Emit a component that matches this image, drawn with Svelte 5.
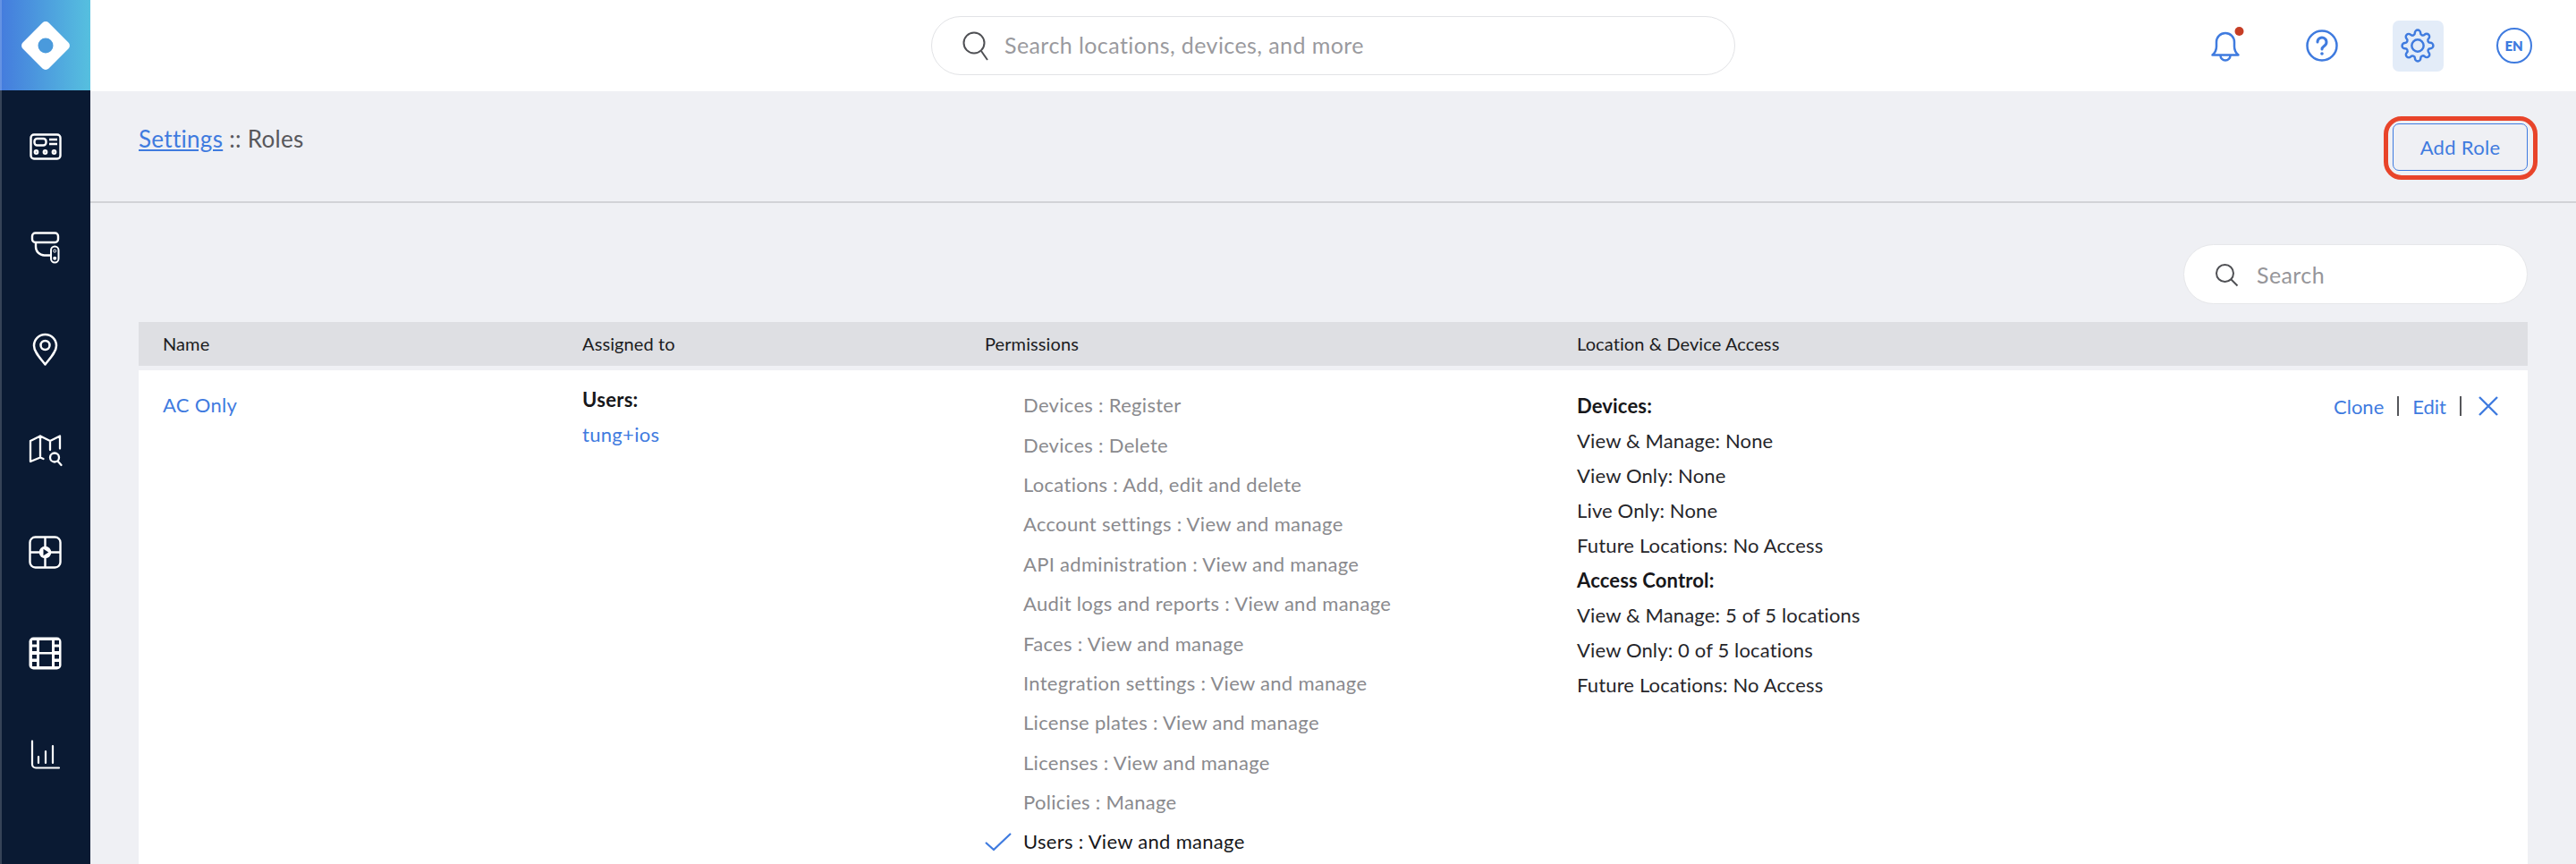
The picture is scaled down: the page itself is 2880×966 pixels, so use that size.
<script lang="ts">
	const permissions = [
		{ label: 'Devices : Register', on: false },
		{ label: 'Devices : Delete', on: false },
		{ label: 'Locations : Add, edit and delete', on: false },
		{ label: 'Account settings : View and manage', on: false },
		{ label: 'API administration : View and manage', on: false },
		{ label: 'Audit logs and reports : View and manage', on: false },
		{ label: 'Faces : View and manage', on: false },
		{ label: 'Integration settings : View and manage', on: false },
		{ label: 'License plates : View and manage', on: false },
		{ label: 'Licenses : View and manage', on: false },
		{ label: 'Policies : Manage', on: false },
		{ label: 'Users : View and manage', on: true }
	];

	const access = [
		{ text: 'Devices:', bold: true },
		{ text: 'View & Manage: None' },
		{ text: 'View Only: None' },
		{ text: 'Live Only: None' },
		{ text: 'Future Locations: No Access' },
		{ text: 'Access Control:', bold: true },
		{ text: 'View & Manage: 5 of 5 locations' },
		{ text: 'View Only: 0 of 5 locations' },
		{ text: 'Future Locations: No Access' }
	];
</script>

<div class="shell">
	<aside class="sidebar">
		<div class="logo">
			<svg width="101" height="101" viewBox="0 0 101 101">
				<rect x="30.5" y="30.5" width="41" height="41" rx="5" transform="rotate(45 51 51)" fill="#fff" />
				<circle cx="51" cy="51" r="8.5" fill="#4a9adc" />
			</svg>
		</div>
		<nav class="nav">
			<div class="nav-item">
				<svg width="40" height="40" viewBox="0 0 40 40" fill="none" stroke="#fff" stroke-width="2.4">
					<rect x="3.5" y="6.5" width="33" height="27" rx="3.5" />
					<rect x="7.5" y="11" width="13" height="7.5" rx="3" />
					<path d="M24 12h9M24 17h9" />
					<circle cx="9.5" cy="26" r="1.7" /><circle cx="19.5" cy="26" r="1.7" /><circle cx="29.5" cy="26" r="1.7" />
				</svg>
			</div>
			<div class="nav-item">
				<svg width="40" height="40" viewBox="0 0 40 40" fill="none" stroke="#fff" stroke-width="2.4">
					<rect x="5" y="3.5" width="29" height="10.5" rx="3.5" />
					<path d="M9 14v5a9.5 9.5 0 0 0 9.5 9.5H25" />
					<rect x="26" y="18.5" width="8.5" height="18" rx="4.25" stroke-width="2" />
					<circle cx="30.2" cy="23.6" r="1.5" stroke-width="1" />
					<circle cx="30.2" cy="31.7" r="2" fill="#fff" stroke="none" />
				</svg>
			</div>
			<div class="nav-item">
				<svg width="40" height="40" viewBox="0 0 40 40" fill="none" stroke="#fff" stroke-width="2.5">
					<path d="M19.5 36.5C14 29.5 7 22.5 7 15.5a12.5 12.5 0 0 1 25 0c0 7-7 14-12.500 21z" stroke-linejoin="round" />
					<circle cx="19.500" cy="15" r="5" />
				</svg>
			</div>
			<div class="nav-item">
				<svg width="40" height="40" viewBox="0 0 40 40" fill="none" stroke="#fff" stroke-width="2.3" stroke-linecap="round" stroke-linejoin="round">
					<path d="M3 9l11-5.500 11 5.500 11-5.500v14M14 3.500v24M25 9v10M3 9v23l11-4.500 3.500 1.500" />
					<circle cx="30" cy="27.500" r="5" />
					<path d="M33.500 31.500l4 4.500" />
				</svg>
			</div>
			<div class="nav-item">
				<svg width="40" height="40" viewBox="0 0 40 40" fill="none" stroke="#fff" stroke-width="2.4">
					<rect x="2.500" y="2.500" width="34" height="34" rx="6" />
					<path d="M19.500 2.500v34M2.500 19.500h34" />
					<circle cx="19.500" cy="19.500" r="6.800" fill="#fff" stroke="none" />
					<path d="M17.500 15.800l5.800 3.700-5.800 3.700z" fill="#0a1a33" stroke="none" />
				</svg>
			</div>
			<div class="nav-item">
				<svg width="40" height="40" viewBox="0 0 40 40">
					<rect x="1.500" y="1.500" width="36" height="36" rx="5" fill="#fff" />
					<path fill="#0a1a33" d="M13 5h14v13H13zM13 20.500h14v13.500H13zM5 5h5v4.500H5zM5 12.500h5v4.500H5zM5 21h5v4.500H5zM5 29h5v5H5zM30 5h5v4.500h-5zM30 12.500h5v4.500h-5zM30 21h5v4.500h-5zM30 29h5v5h-5z" />
				</svg>
			</div>
			<div class="nav-item">
				<svg width="40" height="40" viewBox="0 0 40 40" fill="none" stroke="#fff" stroke-width="2.200" stroke-linecap="round">
					<path d="M5 3.500v26a4 4 0 0 0 4 4h26" />
					<path d="M12 21v7M20 15v13M28 9v19" />
				</svg>
			</div>
		</nav>
	</aside>

	<div class="main">
		<header class="topbar">
			<div></div>
			<div class="global-search">
				<svg width="32" height="34" viewBox="0 0 32 34" fill="none" stroke="#4f5054" stroke-width="2">
					<circle cx="14" cy="14" r="11.500" />
					<path d="M22 23l7 10" />
				</svg>
				<span>Search locations, devices, and more</span>
			</div>
			<div class="top-icons">
				<button class="top-btn" aria-label="Notifications">
					<svg width="44" height="44" viewBox="0 0 44 44" fill="none" stroke="#3f7bdf" stroke-width="2.500" stroke-linejoin="round">
						<path d="M7.500 32.500c3.500-3 4.500-6 4.500-9.500v-5a10 10 0 0 1 20 0v5c0 3.500 1 6.500 4.500 9.500z" />
						<path d="M16.500 33a5.500 5.500 0 0 0 11 0" />
						<circle cx="37.500" cy="6" r="5" fill="#c63d25" stroke="none" />
					</svg>
				</button>
				<button class="top-btn" aria-label="Help">
					<svg width="38" height="38" viewBox="0 0 38 38" fill="none" stroke="#3f7bdf" stroke-width="2.500" stroke-linecap="round">
						<circle cx="19" cy="19" r="16.500" />
						<path d="M14 15a5 5 0 1 1 8 4c-2 1.500-3 2-3 4" stroke-width="3" />
						<circle cx="19" cy="28" r="1.800" fill="#3f7bdf" stroke="none" />
					</svg>
				</button>
				<button class="top-btn active" aria-label="Settings">
					<svg width="38" height="38" viewBox="0 0 24 24" fill="none" stroke="#3f7bdf" stroke-width="1.550">
						<circle cx="12" cy="12" r="4.200" />
						<path d="M19.400 15a1.650 1.650 0 0 0 .33 1.820l.06.06a2 2 0 0 1 0 2.830 2 2 0 0 1-2.830 0l-.06-.06a1.650 1.650 0 0 0-1.820-.33 1.650 1.650 0 0 0-1 1.510V21a2 2 0 0 1-2 2 2 2 0 0 1-2-2v-.09A1.650 1.650 0 0 0 9 19.400a1.650 1.650 0 0 0-1.820.33l-.06.06a2 2 0 0 1-2.830 0 2 2 0 0 1 0-2.830l.06-.06a1.650 1.650 0 0 0 .33-1.820 1.650 1.650 0 0 0-1.510-1H3a2 2 0 0 1-2-2 2 2 0 0 1 2-2h.09A1.650 1.650 0 0 0 4.600 9a1.650 1.650 0 0 0-.33-1.820l-.06-.06a2 2 0 0 1 0-2.830 2 2 0 0 1 2.830 0l.06.06a1.650 1.650 0 0 0 1.820.33H9a1.650 1.650 0 0 0 1-1.510V3a2 2 0 0 1 2-2 2 2 0 0 1 2 2v.09a1.650 1.650 0 0 0 1 1.510 1.650 1.650 0 0 0 1.820-.33l.06-.06a2 2 0 0 1 2.830 0 2 2 0 0 1 0 2.830l-.06.06a1.650 1.650 0 0 0-.33 1.820V9a1.650 1.650 0 0 0 1.510 1H21a2 2 0 0 1 2 2 2 2 0 0 1-2 2h-.09a1.650 1.650 0 0 0-1.510 1z" />
					</svg>
				</button>
				<button class="top-btn" aria-label="Language"><span class="lang">EN</span></button>
			</div>
		</header>

		<div class="page-head">
			<div class="crumbs"><a href="#settings">Settings</a> :: Roles</div>
			<button class="add-role">Add Role</button>
		</div>

		<div class="content">
			<div class="search-row">
				<div class="role-search">
					<svg width="28" height="28" viewBox="0 0 28 28" fill="none" stroke="#4f5054" stroke-width="2">
						<circle cx="12.500" cy="12.500" r="9.500" />
						<path d="M19.500 19.500l7 7" />
					</svg>
					<span>Search</span>
				</div>
			</div>

			<div class="table-head">
				<div>Name</div>
				<div>Assigned to</div>
				<div>Permissions</div>
				<div>Location &amp; Device Access</div>
			</div>

			<div class="table-row">
				<div class="col-name"><a href="#role">AC Only</a></div>
				<div class="col-assigned">
					<div class="strong">Users:</div>
					<a href="#user">tung+ios</a>
				</div>
				<div class="col-perms">
					{#each permissions as p}
						<div class="perm" class:on={p.on}>
							<span class="check">
								{#if p.on}
									<svg width="30" height="22" viewBox="0 0 30 22" fill="none" stroke="#3f7bdf" stroke-width="2.200">
										<path d="M1 12l9 8L29 2" />
									</svg>
								{/if}
							</span>
							{p.label}
						</div>
					{/each}
				</div>
				<div class="col-access">
					<div class="access-list">
						{#each access as a}
							<div class:strong={a.bold}>{a.text}</div>
						{/each}
					</div>
					<div class="actions">
						<a href="#clone">Clone</a>
						<span class="sep"></span>
						<a href="#edit">Edit</a>
						<span class="sep"></span>
						<button class="remove" aria-label="Delete">
							<svg width="22" height="22" viewBox="0 0 22 22" fill="none" stroke="#3f7bdf" stroke-width="2.400">
								<path d="M1 1l20 20M21 1L1 21" />
							</svg>
						</button>
					</div>
				</div>
			</div>
		</div>
	</div>
</div>

<style>
	:global(body) {
		margin: 0;
		font-family: Lato, "Noto Sans", sans-serif;
		background: #eff0f4;
	}
	a { color: #3f7bdf; text-decoration: none; }
	button { font-family: inherit; background: none; border: none; padding: 0; }

	.shell {
		display: flex;
		height: 966px;
		overflow: hidden;
	}

	.sidebar {
		width: 101px;
		flex-shrink: 0;
		background: #0a1a33;
		position: relative;
	}
	.sidebar::before {
		content: '';
		position: absolute;
		left: 0;
		top: 0;
		bottom: 0;
		width: 2px;
		background: rgba(255,255,255,0.18);
	}
	.logo {
		height: 101px;
		background: linear-gradient(90deg, #447bdd, #56c0df);
	}
	.logo svg { display: block; }
	.nav { display: flex; flex-direction: column; padding-top: 6px; }
	.nav-item {
		height: 113.500px;
		display: flex;
		align-items: center;
		justify-content: center;
	}

	.main { flex: 1; min-width: 0; display: flex; flex-direction: column; }

	.topbar {
		height: 102px;
		flex-shrink: 0;
		background: #fff;
		display: grid;
		grid-template-columns: 1fr 899px 1fr;
		align-items: center;
	}
	.global-search {
		height: 66px;
		box-sizing: border-box;
		border: 1.500px solid #e2e3e6;
		border-radius: 33px;
		display: flex;
		align-items: center;
		gap: 16px;
		padding-left: 33px;
		font-size: 25px;
		letter-spacing: 0.42px;
		color: #9a9a9e;
	}
	.global-search span { padding-bottom: 3px; }
	.top-icons {
		display: flex;
		justify-content: flex-end;
		gap: 50.500px;
		padding-right: 41px;
	}
	.top-btn {
		width: 57px;
		height: 57px;
		border-radius: 7px;
		display: flex;
		align-items: center;
		justify-content: center;
	}
	.top-btn.active { background: #e3ecf8; }
	.lang {
		width: 36px;
		height: 36px;
		flex-shrink: 0;
		border: 2px solid #3f7bdf;
		border-radius: 50%;
		display: flex;
		align-items: center;
		justify-content: center;
		color: #3f7bdf;
		font-size: 15px;
		font-weight: 800;
	}

	.page-head {
		height: 125px;
		flex-shrink: 0;
		box-sizing: border-box;
		border-bottom: 2px solid #d2d3d7;
		padding: 36px 54px 0;
		display: flex;
		justify-content: space-between;
		align-items: flex-start;
	}
	.crumbs { font-size: 26px; letter-spacing: 0.3px; color: #58585c; line-height: 34px; }
	.crumbs a { text-decoration: underline; }
	.add-role {
		position: relative;
		width: 151px;
		height: 53px;
		box-sizing: border-box;
		border: 1.500px solid #3f7bdf;
		border-radius: 7px;
		color: #3f7bdf;
		font-size: 22px;
		letter-spacing: 0.3px;
	}
	.add-role::after {
		content: '';
		position: absolute;
		inset: -9.500px -11.500px -10.500px;
		border: 5px solid #e8442a;
		border-radius: 20px;
	}

	.content { padding: 46px 54px 0; }
	.search-row { display: flex; justify-content: flex-end; }
	.role-search {
		width: 385px;
		height: 67px;
		box-sizing: border-box;
		background: #fff;
		border: 1px solid #e6e7ea;
		border-radius: 34px;
		display: flex;
		align-items: center;
		gap: 20px;
		padding-left: 33px;
		font-size: 25px;
		letter-spacing: 0.4px;
		color: #96969a;
	}
	.table-head {
		margin-top: 20px;
		height: 49px;
		box-sizing: border-box;
		padding-bottom: 2px;
		background: #dedfe3;
		display: grid;
		grid-template-columns: 469px 450px 662px 1fr;
		align-items: center;
		padding-left: 27px;
		font-size: 20px;
		letter-spacing: 0.1px;
		color: #1c1c1e;
	}
	.table-row {
		margin-top: 5px;
		background: #fff;
		height: 560px;
		display: grid;
		grid-template-columns: 469px 450px 662px 1fr;
		padding-left: 27px;
		font-size: 22px;
		letter-spacing: 0.3px;
	}
	.col-name { padding-top: 24px; line-height: 30px; }
	.col-assigned { padding-top: 13px; line-height: 39px; }
	.col-assigned a { display: block; }
	.strong { font-weight: 700; color: #17171a; }
	.col-perms { padding-top: 16.500px; }
	.perm {
		height: 44.400px;
		display: flex;
		align-items: center;
		color: #8a8a8e;
	}
	.perm.on { color: #17171a; }
	.check { width: 43px; flex-shrink: 0; display: flex; }
	.col-access {
		display: flex;
		justify-content: space-between;
		align-items: flex-start;
		padding-right: 33px;
	}
	.access-list { padding-top: 20px; line-height: 39px; color: #26262a; letter-spacing: 0.15px; }
	.actions {
		margin-top: 29px;
		display: flex;
		align-items: center;
		height: 22px;
		gap: 15px;
		letter-spacing: 0;
	}
	.sep { width: 2px; height: 22px; background: #55565a; }
	.remove { display: flex; margin-left: 4px; }
</style>
